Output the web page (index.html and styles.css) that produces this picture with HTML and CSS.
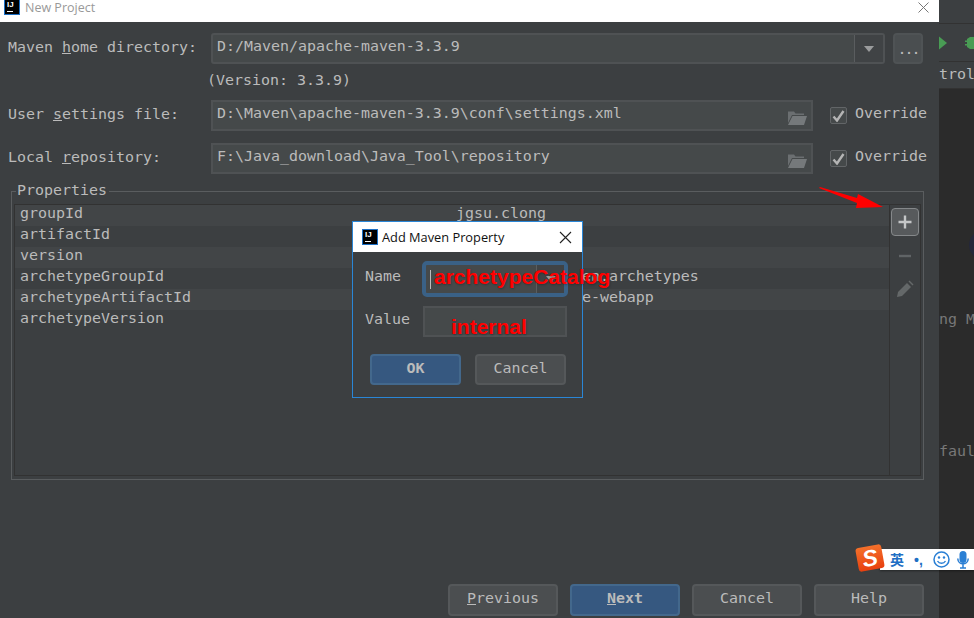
FILE: index.html
```html
<!DOCTYPE html>
<html lang="en">

<head>
    <meta charset="UTF-8">
    <meta name="viewport" content="width=device-width, initial-scale=1.0">
    <title>New Project</title>
    <link rel="stylesheet" href="styles.css">
</head>

<body>
    <div class="screen">
        <div class="dialog">
            <div class="titlebar">
                <span class="ij-logo">IJ</span>
                <span class="titlebar-text">New Project</span>
                <svg class="close-x" width="11" height="11" viewBox="0 0 11 11"><path d="M.5.5l10 10M10.500.5l-10 10" stroke="#777" fill="none"/></svg>
            </div>
            <div class="content">
                <div class="form-row row-home">
                    <label class="form-label">Maven <u>h</u>ome directory:</label>
                    <div class="field combo">
                        <span class="field-text">D:/Maven/apache-maven-3.3.9</span>
                        <span class="combo-arrow"><i class="caret"></i></span>
                    </div>
                    <button class="browse-btn">...</button>
                </div>
                <div class="version-row">(Version: 3.3.9)</div>
                <div class="form-row">
                    <label class="form-label">User <u>s</u>ettings file:</label>
                    <div class="field path">
                        <span class="field-text">D:\Maven\apache-maven-3.3.9\conf\settings.xml</span>
                        <svg class="folder" width="19" height="15" viewBox="0 0 19 15"><path d="M0 1.500h6l1.500 2h8.500v1.500H4L0 13z" fill="#6b6f71"/><path d="M4.500 6H19l-3 9H0z" fill="#75797b"/></svg>
                    </div>
                    <span class="check"><svg width="13" height="12" viewBox="0 0 13 12"><path d="M1.500 6.500l3.500 4L11.500 1" stroke="#b4b4b4" stroke-width="2.400" fill="none"/></svg></span>
                    <span class="check-label">Override</span>
                </div>
                <div class="form-row row-repo">
                    <label class="form-label">Local <u>r</u>epository:</label>
                    <div class="field path">
                        <span class="field-text">F:\Java_download\Java_Tool\repository</span>
                        <svg class="folder" width="19" height="15" viewBox="0 0 19 15"><path d="M0 1.500h6l1.500 2h8.500v1.500H4L0 13z" fill="#6b6f71"/><path d="M4.500 6H19l-3 9H0z" fill="#75797b"/></svg>
                    </div>
                    <span class="check"><svg width="13" height="12" viewBox="0 0 13 12"><path d="M1.500 6.500l3.500 4L11.500 1" stroke="#b4b4b4" stroke-width="2.400" fill="none"/></svg></span>
                    <span class="check-label">Override</span>
                </div>
                <fieldset class="properties">
                    <legend>Properties</legend>
                    <div class="props-inner">
                        <div class="props-table">
                            <div class="prop-row"><span class="prop-key">groupId</span><span>jgsu.clong</span></div>
                            <div class="prop-row"><span class="prop-key">artifactId</span><span></span></div>
                            <div class="prop-row"><span class="prop-key">version</span><span></span></div>
                            <div class="prop-row"><span class="prop-key">archetypeGroupId</span><span>org.apache.maven.archetypes</span></div>
                            <div class="prop-row"><span class="prop-key">archetypeArtifactId</span><span>maven-archetype-webapp</span></div>
                            <div class="prop-row"><span class="prop-key">archetypeVersion</span><span></span></div>
                        </div>
                        <div class="props-tools">
                            <span class="tool tool-add"><svg width="16" height="16" viewBox="0 0 16 16"><path d="M8 1.500v13M1.500 8h13" stroke="#c4c6c7" stroke-width="2.400"/></svg></span>
                            <span class="tool"><svg width="14" height="4" viewBox="0 0 14 4"><path d="M1 2h12" stroke="#606466" stroke-width="2.400"/></svg></span>
                            <span class="tool"><svg width="18" height="18" viewBox="0 0 18 18"><path d="M1 17l1-5L11 3l4 4-9 9z" fill="#646869"/><path d="M12.500 1.500l1-1 4 4-1 1z" fill="#646869"/></svg></span>
                        </div>
                    </div>
                </fieldset>
                <div class="footer">
                    <button class="btn"><u>P</u>revious</button>
                    <button class="btn btn-primary"><u>N</u>ext</button>
                    <button class="btn">Cancel</button>
                    <button class="btn">Help</button>
                </div>
            </div>
        </div>

        <div class="ide-behind">
            <div class="ide-top"></div>
            <div class="ide-toolbar">
                <svg width="35" height="16" viewBox="0 0 35 16"><path d="M0 1.500L8 8 0 14.500z" fill="#499c54"/><path d="M31 2h4v12h-4l-3-2v-1.500h-2V9h2V7h-2V5.500h2V4z" fill="#499c54"/></svg>
            </div>
            <div class="ide-tab">trol</div>
            <div class="ide-editor">
                <div class="ide-line line-one">ng M</div>
                <div class="ide-line line-two">faul</div>
            </div>
        </div>

        <!-- things on top of the dialog -->
        <svg class="red-arrow" width="64" height="26" viewBox="0 0 64 26"><path d="M0 1l1-1 37 11 1-4 25 13-27 1 1-5z" fill="#f00"/></svg>
        <span class="avatar-edge"></span>

        <div class="add-prop">
            <div class="add-prop-title">
                <span class="ij-logo">IJ</span>
                <span class="add-prop-text">Add Maven Property</span>
                <svg width="13" height="13" viewBox="0 0 13 13"><path d="M1 1l11 11M12 1L1 12" stroke="#222" stroke-width="1.100" fill="none"/></svg>
            </div>
            <div class="add-prop-body">
                <div class="add-prop-row">
                    <span class="add-prop-label">Name</span>
                    <div class="name-field"><i class="text-caret"></i><span class="combo-arrow small"><i class="caret"></i></span></div>
                </div>
                <div class="add-prop-row value-row">
                    <span class="add-prop-label">Value</span>
                    <div class="value-field"></div>
                </div>
                <div class="add-prop-btns">
                    <button class="btn btn-primary small-btn">OK</button>
                    <button class="btn small-btn">Cancel</button>
                </div>
            </div>
        </div>
        <span class="red-note note-name">archetypeCatalog</span>
        <span class="red-note note-value">internal</span>

        <div class="ime-bar">
            <span class="ime-logo">S</span>
            <span class="ime-lang">英</span>
            <span class="ime-punct">•,</span>
            <svg width="17" height="17" viewBox="0 0 17 17"><circle cx="8.500" cy="8.500" r="7.500" fill="none" stroke="#2a7fd4" stroke-width="1.500"/><circle cx="6" cy="6.500" r="1.200" fill="#2a7fd4"/><circle cx="11" cy="6.500" r="1.200" fill="#2a7fd4"/><path d="M4.500 10c1.800 3 6.200 3 8 0" stroke="#2a7fd4" stroke-width="1.400" fill="none"/></svg>
            <svg class="ime-mic" width="12" height="18" viewBox="0 0 12 18"><rect x="2.500" y="0" width="7" height="12" rx="3.500" fill="#2a7fd4"/><path d="M.8 7.500c0 7 10.400 7 10.400 0M6 13.500v3M3 17h6" stroke="#2a7fd4" stroke-width="1.500" fill="none"/></svg>
        </div>
    </div>
</body>

</html>
```

FILE: styles.css
```css
body {
    margin: 0;
    background: #2b2b2b;
    color: #bbbbbb;
    font-family: "DejaVu Sans Mono", monospace;
    font-size: 14.95px;
    overflow: hidden;
}

.screen {
    position: relative;
    display: flex;
    width: 974px;
    height: 618px;
    overflow: hidden;
}

.dialog {
    width: 939px;
    flex-shrink: 0;
    background: #3c3f41;
    display: flex;
    flex-direction: column;
}

.titlebar {
    height: 22px;
    background: #fff;
    display: flex;
    align-items: center;
    padding: 0 10px 8px 4px;
    box-sizing: border-box;
}

.titlebar-text {
    margin-left: 5px;
    font-family: "Open Sans", sans-serif;
    font-size: 12.500px;
    color: #999;
}

.close-x {
    margin-left: auto;
}

.ij-logo {
    position: relative;
    width: 16px;
    height: 16px;
    box-sizing: border-box;
    flex-shrink: 0;
    background: #000;
    border: 1px solid #1c6fc4;
    color: #fff;
    font-family: "Liberation Sans", sans-serif;
    font-size: 8px;
    font-weight: bold;
    line-height: 9px;
    padding-left: 2px;
}

.ij-logo::after {
    content: "";
    position: absolute;
    left: 2px;
    bottom: 2px;
    width: 6px;
    height: 1px;
    background: #fff;
}

.content {
    flex: 1;
    padding: 11px 15px 2px 8px;
    display: flex;
    flex-direction: column;
}

.form-row {
    display: flex;
    align-items: center;
    height: 31px;
}

.row-repo {
    margin-top: 12px;
}

.form-label {
    width: 203px;
    flex-shrink: 0;
    margin-bottom: 4px;
}

.field {
    height: 31px;
    flex-shrink: 0;
    box-sizing: border-box;
    border: 2px solid #4f5254;
    background: #45494a;
    display: flex;
    align-items: center;
    padding-left: 4px;
}

.combo {
    width: 674px;
    border-radius: 3px;
}

.path {
    width: 602px;
}

.field-text {
    flex: 1;
    padding-bottom: 5px;
}

.combo-arrow {
    width: 28px;
    height: 100%;
    border-left: 1px solid #5a5d5f;
    display: flex;
    align-items: center;
    justify-content: center;
    background: #404345;
}

.caret {
    width: 0;
    height: 0;
    border-left: 5px solid transparent;
    border-right: 5px solid transparent;
    border-top: 6px solid #9a9c9d;
}

.browse-btn {
    width: 30px;
    height: 31px;
    margin-left: 8px;
    flex-shrink: 0;
    padding: 0;
    border: 2px solid #4f5355;
    border-radius: 4px;
    background: #4a4e50;
    color: #bbbbbb;
    font: inherit;
    letter-spacing: -2px;
}

.version-row {
    height: 36px;
    line-height: 32px;
    padding-left: 199px;
}

.folder {
    margin: 3px 4px 0 auto;
}

.check {
    width: 17px;
    height: 17px;
    flex-shrink: 0;
    box-sizing: border-box;
    margin-left: 17px;
    border: 1px solid #626567;
    border-radius: 2px;
    background: #45494a;
    display: flex;
    align-items: center;
    justify-content: center;
}

.check-label {
    margin-left: 8px;
    margin-bottom: 5px;
    white-space: nowrap;
}

.properties {
    margin: 7px 0 0 3px;
    padding: 3px 2px 2px;
    width: 913px;
    height: 299px;
    box-sizing: border-box;
    border: 1px solid #5a5d5f;
    min-width: 0;
}

.properties legend {
    margin-left: 2px;
    padding: 0 2px 2px 1px;
    line-height: 18px;
}

.props-inner {
    height: 272px;
    box-sizing: border-box;
    border: 1px solid #323232;
    display: flex;
}

.props-table {
    flex: 1;
}

.prop-row {
    height: 21px;
    line-height: 17px;
    display: grid;
    grid-template-columns: 441px 1fr;
    background: #3c3f41;
}

.prop-row:nth-child(odd) {
    background: #424547;
}

.prop-key {
    padding-left: 5px;
}

.props-tools {
    width: 30px;
    border-left: 1px solid #323232;
    display: flex;
    flex-direction: column;
    align-items: center;
    padding-top: 3px;
}

.tool {
    width: 28px;
    height: 33px;
    display: flex;
    align-items: center;
    justify-content: center;
}

.tool-add {
    height: 28px;
    margin-bottom: 3px;
    border: 1px solid #85888a;
    border-radius: 4px;
    background: #575a5c;
    box-sizing: border-box;
}

.footer {
    margin-top: auto;
    display: flex;
    justify-content: flex-end;
    gap: 12px;
}

.btn {
    width: 110px;
    height: 32px;
    padding: 0 0 5px;
    box-sizing: border-box;
    border: 2px solid #55585a;
    border-radius: 4px;
    background: #4b4e50;
    color: #bbbbbb;
    font: inherit;
}

.btn-primary {
    background: #365880;
    border-color: #43688c;
    font-weight: bold;
    color: #bbbbbb;
}

.ide-behind {
    flex: 1;
    display: flex;
    flex-direction: column;
    min-width: 0;
    overflow: hidden;
}

.ide-top {
    height: 23px;
    background: #3c3f41;
    border-bottom: 1px solid #323232;
}

.ide-toolbar {
    height: 37px;
    background: #3c3f41;
    border-bottom: 1px solid #323232;
    display: flex;
    align-items: center;
}

.ide-tab {
    height: 26px;
    line-height: 24px;
    background: #3c3f41;
    border-bottom: 1px solid #323232;
    white-space: nowrap;
}

.ide-editor {
    flex: 1;
    background: #2b2b2b;
    color: #787878;
}

.ide-line {
    white-space: nowrap;
    height: 18px;
    line-height: 18px;
}

.line-one {
    margin-top: 221px;
}

.line-two {
    margin-top: 114px;
}

.red-arrow {
    position: absolute;
    left: 819px;
    top: 187px;
}

.avatar-edge {
    position: absolute;
    left: 969px;
    top: 230px;
    width: 30px;
    height: 30px;
    border-radius: 50%;
    background: #25283a;
}

.add-prop {
    position: absolute;
    left: 352px;
    top: 221px;
    width: 231px;
    height: 177px;
    box-sizing: border-box;
    border: 1px solid #2a86d6;
    background: #3c3f41;
}

.add-prop-title {
    height: 30px;
    background: #fff;
    display: flex;
    align-items: center;
    padding: 0 10px 0 9px;
}

.add-prop-text {
    flex: 1;
    margin-left: 4px;
    font-family: "Open Sans", sans-serif;
    font-size: 12.800px;
    color: #111;
}

.add-prop-body {
    padding: 9px 14px 0 12px;
}

.add-prop-row {
    display: flex;
    align-items: center;
    height: 36px;
}

.value-row {
    margin-top: 9px;
    height: 31px;
}

.add-prop-label {
    width: 58px;
    margin-bottom: 7px;
}

.value-row .add-prop-label {
    margin-bottom: 5px;
}

.name-field {
    width: 146px;
    height: 36px;
    margin-left: -1px;
    box-sizing: border-box;
    border: 4px solid #3a6186;
    border-radius: 5px;
    background: #45494a;
    display: flex;
    align-items: center;
    justify-content: space-between;
    padding-left: 4px;
}

.text-caret {
    width: 1px;
    height: 19px;
    background: #bbbbbb;
}

.combo-arrow.small {
    width: 27px;
}

.value-field {
    width: 144px;
    height: 31px;
    box-sizing: border-box;
    border: 2px solid #4f5254;
    background: #45494a;
}

.add-prop-btns {
    display: flex;
    gap: 14px;
    margin: 17px 0 0 5px;
}

.small-btn {
    width: 91px;
    height: 31px;
    padding-bottom: 3px;
}

.red-note {
    position: absolute;
    color: #f00;
    font-family: "Liberation Sans", sans-serif;
    font-weight: bold;
    font-size: 21px;
    line-height: 24px;
    text-shadow: 1px 1px 2px rgba(0, 0, 0, .25);
}

.note-name {
    left: 434px;
    top: 265px;
}

.note-value {
    left: 451px;
    top: 315px;
}

.ime-bar {
    position: absolute;
    left: 880px;
    top: 549px;
    width: 94px;
    height: 21px;
    background: #fff;
    box-shadow: 0 1px 2px rgba(0, 0, 0, .4);
    display: flex;
    align-items: center;
    padding-left: 10px;
    box-sizing: border-box;
    color: #1f6fc4;
}

.ime-logo {
    position: absolute;
    left: -23px;
    top: -3px;
    width: 26px;
    height: 24px;
    border-radius: 3px;
    background: linear-gradient(#f4702a, #e8400f);
    transform: rotate(-10deg);
    color: #fff;
    font-family: "Liberation Sans", sans-serif;
    font-weight: bold;
    font-style: italic;
    font-size: 23px;
    line-height: 24px;
    text-align: center;
}

.ime-lang {
    font-family: "Noto Sans CJK SC", sans-serif;
    font-weight: bold;
    font-size: 14px;
    line-height: 21px;
}

.ime-punct {
    width: 19px;
    margin-left: 10px;
    font-family: "Liberation Sans", sans-serif;
    font-weight: bold;
    font-size: 14px;
}

.ime-mic {
    margin-left: 7px;
}
```
